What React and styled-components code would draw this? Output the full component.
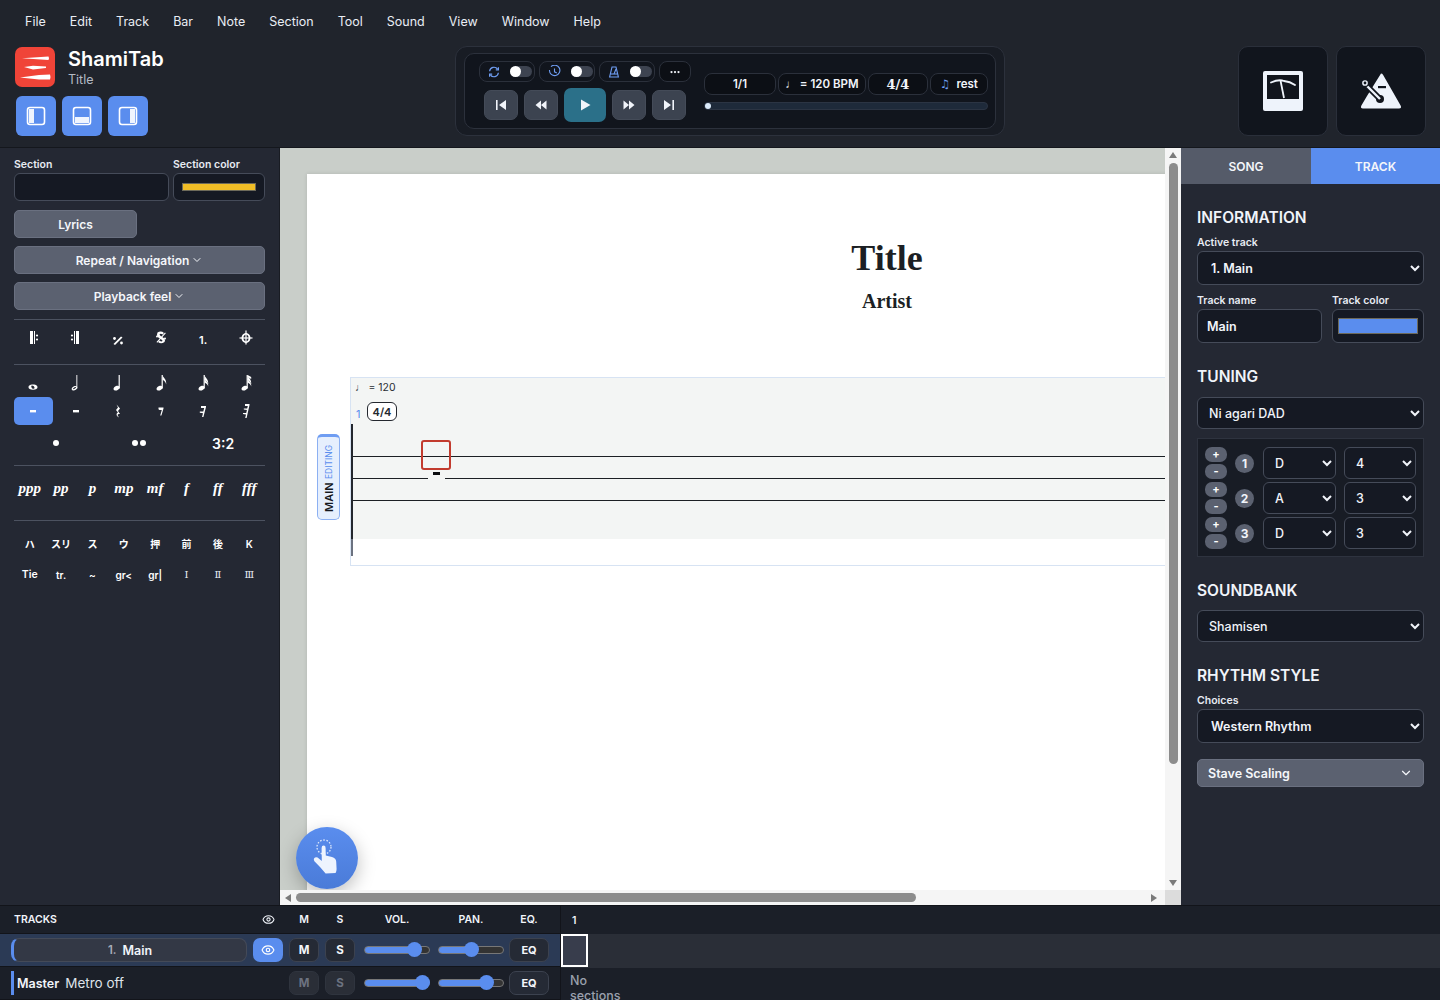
import React from "react";
import styled, { createGlobalStyle } from "styled-components";
import { ChevronDown, Eye, MoreHorizontal } from "lucide-react";

const GlobalStyle = createGlobalStyle`
  html, body { margin: 0; padding: 0; height: 100%; overflow: hidden; }
  body { background: #20242c; font-family: Inter, "Noto Sans", "Liberation Sans", sans-serif; color: #f1f4fa; }
  * { box-sizing: border-box; }
  #root { height: 1000px; }
`;

const BLUE = "#5a8dee";

const menuItems = ["File", "Edit", "Track", "Bar", "Note", "Section", "Tool", "Sound", "View", "Window", "Help"];

function PanelIcon({ side }) {
  return (
    <svg width="20" height="20" viewBox="0 0 20 20" fill="none">
      <rect x="1.5" y="1.5" width="17" height="17" rx="2.5" stroke="#fff" strokeWidth="1.6" />
      {side === "left" && <rect x="3" y="3" width="5" height="14" fill="#fff" opacity="0.9" />}
      {side === "bottom" && <rect x="3" y="11" width="14" height="6" fill="#fff" opacity="0.9" />}
      {side === "right" && <rect x="12" y="3" width="5" height="14" fill="#fff" opacity="0.9" />}
    </svg>
  );
}

function Logo() {
  return (
    <svg width="40" height="40" viewBox="0 0 40 40">
      <rect width="40" height="40" rx="7" fill="#f04438" />
      <path d="M7 11.2 L26 10 L33.5 9.6 Q34.5 11.2 33.5 13 L26 12.6 Z" fill="#fff" />
      <path d="M9 20 L18 18.8 L31 19.4 L31 21 L18 22.4 Z" fill="#fff" />
      <path d="M5 30.4 L24 28 L35 27.6 Q36 30 35 32.6 L24 32.4 Z" fill="#fff" />
    </svg>
  );
}

function LoopIcon() {
  return (
    <svg width="12" height="12" viewBox="0 0 12 12" fill="none" stroke="#6f9df2" strokeWidth="1.2">
      <path d="M1.6 5.2 A4.4 4.4 0 0 1 9.6 3.2" />
      <path d="M10.4 1.2 V3.8 H7.8" />
      <path d="M10.4 6.8 A4.4 4.4 0 0 1 2.4 8.8" />
      <path d="M1.6 10.8 V8.2 H4.2" />
    </svg>
  );
}

function ClockIcon() {
  return (
    <svg width="13" height="13" viewBox="0 0 13 13" fill="none" stroke="#6f9df2" strokeWidth="1.1">
      <path d="M3 1.7 A5.2 5.2 0 1 1 1.5 5" />
      <path d="M6.5 3.4 V6.8 L8.8 8" />
    </svg>
  );
}

function MetroSmallIcon() {
  return (
    <svg width="12" height="12" viewBox="0 0 12 12" fill="none" stroke="#6f9df2" strokeWidth="1.1">
      <path d="M4 1 H8 L10.4 11 H1.6 Z" />
      <path d="M6 8 L8 3" />
      <path d="M2.6 8 H9.4" />
    </svg>
  );
}

function TransportIcon({ kind }) {
  const paths = {
    first: "M2 2h1.6v10H2z M12 2v10L5 7z",
    back: "M7 2.5v9L1.5 7z M12.5 2.5v9L7 7z",
    play: "M3 1.5v11L12.5 7z",
    forward: "M1.5 2.5v9L7 7z M7 2.5v9L12.5 7z",
    last: "M2 2v10l7-5z M10.4 2H12v10h-1.6z",
  };
  return (
    <svg width="14" height="14" viewBox="0 0 14 14" fill="#f1f4fa">
      <path d={paths[kind]} />
    </svg>
  );
}

function TuningIcon() {
  return (
    <svg width="40" height="40" viewBox="0 0 40 40">
      <rect width="40" height="40" rx="2" fill="#eef3fb" />
      <rect x="4" y="4" width="32" height="24" fill="#11151d" />
      <path d="M8 11.5 Q16 8 21 10 Q27 10.5 32 14" fill="none" stroke="#eef3fb" strokeWidth="1.8" strokeLinecap="round" />
      <path d="M17.5 9.5 L21 27" fill="none" stroke="#eef3fb" strokeWidth="1.8" />
    </svg>
  );
}

function MetronomeIcon() {
  return (
    <svg width="42" height="38" viewBox="0 0 42 38">
      <path d="M21 1.5 Q22.3 1.5 23 2.8 L40.6 33.6 Q42 36.5 39 36.5 L3 36.5 Q0 36.5 1.4 33.6 L7 24 L21 1.5 Z" fill="#eef3fb" />
      <rect x="18" y="14" width="8" height="2.2" fill="#11151d" />
      <circle cx="20" cy="27" r="4" fill="#11151d" />
      <path d="M4 11 L20 27" stroke="#11151d" strokeWidth="6" />
      <path d="M5 12 L20 27" stroke="#eef3fb" strokeWidth="2.4" />
      <circle cx="5" cy="11" r="3.6" fill="#eef3fb" stroke="#11151d" strokeWidth="1.5" />
      <circle cx="5" cy="11" r="1.4" fill="#11151d" />
    </svg>
  );
}

function BarSymbol({ kind }) {
  const white = "#fff";
  return (
    <svg width="16" height="16" viewBox="0 0 16 16" fill={white}>
      {kind === "start" && (
        <>
          <rect x="5" y="1" width="3" height="13" />
          <rect x="9" y="1" width="1" height="13" />
          <circle cx="12" cy="5.5" r="1.1" />
          <circle cx="12" cy="9.5" r="1.1" />
        </>
      )}
      {kind === "end" && (
        <>
          <rect x="6" y="1" width="1" height="13" />
          <rect x="8" y="1" width="3" height="13" />
          <circle cx="4" cy="5.5" r="1.1" />
          <circle cx="4" cy="9.5" r="1.1" />
        </>
      )}
      {kind === "percent" && (
        <>
          <path d="M3.5 14 L11 6.5 L12.5 7.5 L5 15 Z" />
          <circle cx="4.5" cy="8.5" r="1.4" />
          <circle cx="11.5" cy="13" r="1.4" />
        </>
      )}
      {kind === "segno" && (
        <>
          <path d="M4.5 2.5 Q8 0.5 11 3 L9.5 4.5 Q7.5 3 6.5 4.5 Q7 6 10 7.5 Q13 9.5 11.5 12 Q8 14.5 5 12 L6.5 10.5 Q8.5 12.5 9.6 10.8 Q9 9.5 6 8 Q3 6 4.5 2.5 Z" />
          <path d="M3.5 12 L12 2.5 L12.8 3.2 L4.3 12.8 Z" />
          <circle cx="4" cy="6.5" r="1" />
          <circle cx="12" cy="8.5" r="1" />
        </>
      )}
      {kind === "coda" && (
        <>
          <path fillRule="evenodd" d="M8 3 A4.5 5 0 1 1 7.99 3 Z M8 4.6 A2.6 3.4 0 1 0 8.01 4.6 Z" />
          <rect x="7.4" y="0.5" width="1.2" height="14" />
          <rect x="1.5" y="7.4" width="13" height="1.2" />
        </>
      )}
    </svg>
  );
}

// flags: 0 = quarter, 1 = eighth ...
function NoteIcon({ value }) {
  if (value === "whole") {
    return (
      <svg width="16" height="18" viewBox="0 0 16 18">
        <path fillRule="evenodd" fill="#fff" d="M8 10.5 C11.5 10.5 12.5 12 12.5 13.2 C12.5 14.5 11 15.7 8 15.7 C5 15.7 3.5 14.5 3.5 13.2 C3.5 12 4.5 10.5 8 10.5 Z M7 11.5 C6 11.5 6 13 7 14.2 C8 15.2 9.7 15 9.5 13.5 C9.3 12.2 8 11.5 7 11.5 Z" />
      </svg>
    );
  }
  const flags = { half: 0, quarter: 0, eighth: 1, sixteenth: 2, thirtysecond: 3 }[value];
  return (
    <svg width="16" height="18" viewBox="0 0 16 18" fill="#fff">
      {value === "half" ? (
        <path fillRule="evenodd" d="M6 12.2 C8.4 11.4 9.6 12.6 9.2 14 C8.6 15.8 6 17 4.4 16.2 C3 15.4 3.6 13.2 6 12.2 Z M7.5 13 C6.4 13.2 4.6 14.6 4.8 15.2 C5.2 15.8 7.4 14.6 8.2 13.6 C8.4 13.2 8 12.9 7.5 13 Z" />
      ) : (
        <path d="M6 12 C8.6 11 10 12.4 9.5 14 C8.9 15.9 6 17.2 4.3 16.3 C2.8 15.4 3.4 13.1 6 12 Z" />
      )}
      <rect x={value === "half" ? 8.4 : 8.6} y="1" width={value === "half" ? 0.9 : 1.2} height="13.5" />
      {flags >= 1 && <path d="M9.6 1 C10 4 13.8 5 13.2 10.5 C12.8 7.8 11 7 9.6 5.8 Z" />}
      {flags >= 2 && <path d="M9.6 4 C10 7 13.8 8 13.2 12.5 C12.8 10 11 9.8 9.6 8.6 Z" />}
      {flags >= 3 && <path d="M9.6 1 L13.2 3 L13.2 5 L9.6 3 Z" />}
    </svg>
  );
}

function RestIcon({ value }) {
  return (
    <svg width="16" height="16" viewBox="0 0 16 16" fill="#fff">
      {(value === "whole" || value === "half") && <rect x="5" y="7" width="6" height="2.4" />}
      {value === "quarter" && (
        <path d="M6.5 1.5 L10 5.5 L8 8 L10 11 Q8 10.5 7.5 12 L9 14.5 Q5.5 12.5 7 10 L8 9.6 L6 7 L8 4.6 Z" />
      )}
      {value === "eighth" && (
        <>
          <path d="M5.5 4.5 L10.5 4.5 L10.5 5.6 L8.4 12.5 L7.2 12.5 L8.8 7 Q6.5 7.4 5.5 6.2 Z" />
        </>
      )}
      {value === "sixteenth" && (
        <>
          <path d="M6 3 L11 3 L11 4 L8.4 14 L7 14 L8 10.2 L4.8 9.8 L4.8 8.6 L8.3 8.6 L9.2 5 L6 5 Z" />
        </>
      )}
      {value === "thirtysecond" && (
        <>
          <path d="M7 1 L11.5 1 L11.5 2 L8.6 15 L7.2 15 L8 11.5 L5 11 L5 10 L8.2 10 L8.9 7 L5.8 6.6 L5.8 5.5 L9.2 5.5 L9.8 3 L7 3 Z" />
        </>
      )}
    </svg>
  );
}

function DotIcon({ count }) {
  return (
    <svg width="18" height="8" viewBox="0 0 18 8" fill="#fff">
      {count === 1 && <circle cx="9" cy="4" r="3" />}
      {count === 2 && (
        <>
          <circle cx="5" cy="4" r="3" />
          <circle cx="13" cy="4" r="3" />
        </>
      )}
    </svg>
  );
}

function HandIcon() {
  return (
    <svg width="30" height="38" viewBox="0 0 30 38">
      <circle cx="12" cy="9" r="7" fill="none" stroke="#e9f1fd" strokeWidth="1.3" strokeDasharray="1.6 1.6" opacity="0.9" />
      <path
        fill="#eef4fe"
        d="M9.6 10 Q9.6 7.6 11.6 7.6 Q13.6 7.6 13.6 10 L13.8 17.4 L20 19 Q24 20 24.2 23.6 L24.6 31 Q24.6 33 23.6 35 L13.6 35.6 Q11 32.4 8 29 L2.4 23.2 Q1 21 3 19.6 Q5 18.6 6.8 20.4 L9.8 23 Z"
      />
    </svg>
  );
}

const App = () => {
  return (
    <Shell>
      <GlobalStyle />
      <TopBar>
        <MenuBar>
          {menuItems.map((m) => (
            <MenuItem key={m}>{m}</MenuItem>
          ))}
        </MenuBar>
        <HeaderRow>
          <Brand>
            <BrandTop>
              <Logo />
              <BrandText>
                <BrandName>ShamiTab</BrandName>
                <BrandSub>Title</BrandSub>
              </BrandText>
            </BrandTop>
            <PanelButtons>
              <PanelButton><PanelIcon side="left" /></PanelButton>
              <PanelButton><PanelIcon side="bottom" /></PanelButton>
              <PanelButton><PanelIcon side="right" /></PanelButton>
            </PanelButtons>
          </Brand>
          <TransportOuter>
            <TransportInner>
              <TransportLeft>
                <ToggleRow>
                  <TogglePill><LoopIcon /><Switch /></TogglePill>
                  <TogglePill><ClockIcon /><Switch /></TogglePill>
                  <TogglePill><MetroSmallIcon /><Switch /></TogglePill>
                  <MorePill><MoreHorizontal size={12} strokeWidth={2.5} /></MorePill>
                </ToggleRow>
                <TransportButtons>
                  <TransportButton><TransportIcon kind="first" /></TransportButton>
                  <TransportButton><TransportIcon kind="back" /></TransportButton>
                  <PlayButton><TransportIcon kind="play" /></PlayButton>
                  <TransportButton><TransportIcon kind="forward" /></TransportButton>
                  <TransportButton><TransportIcon kind="last" /></TransportButton>
                </TransportButtons>
              </TransportLeft>
              <TransportRight>
                <InfoRow>
                  <InfoCell $w={72}>1/1</InfoCell>
                  <InfoCell $w={88}>♩ = 120 BPM</InfoCell>
                  <InfoCell $w={60} $serif>4/4</InfoCell>
                  <InfoCell $w={58}><BlueNote>♫</BlueNote>rest</InfoCell>
                </InfoRow>
                <Progress><ProgressDot /></Progress>
              </TransportRight>
            </TransportInner>
          </TransportOuter>
          <Tiles>
            <Tile><TuningIcon /></Tile>
            <Tile><MetronomeIcon /></Tile>
          </Tiles>
        </HeaderRow>
      </TopBar>

      <Middle>
        <LeftPanel>
          <FieldRow>
            <Field $w={155}>
              <SmallLabel>Section</SmallLabel>
              <DarkInput />
            </Field>
            <Field $w={92}>
              <SmallLabel>Section color</SmallLabel>
              <ColorBox $h={28} $pad={9}><Swatch $color="#f0bd26" $h={8} /></ColorBox>
            </Field>
          </FieldRow>
          <GreyButton $w={123}>Lyrics</GreyButton>
          <GreyButton>Repeat / Navigation<ChevronDown size={12} /></GreyButton>
          <GreyButton>Playback feel<ChevronDown size={12} /></GreyButton>
          <Divider />
          <SymbolGrid $cols={6} $rowH={36}>
            <SymbolCell><BarSymbol kind="start" /></SymbolCell>
            <SymbolCell><BarSymbol kind="end" /></SymbolCell>
            <SymbolCell><BarSymbol kind="percent" /></SymbolCell>
            <SymbolCell><BarSymbol kind="segno" /></SymbolCell>
            <SymbolCell $size={11} $down={3}>1.</SymbolCell>
            <SymbolCell><BarSymbol kind="coda" /></SymbolCell>
          </SymbolGrid>
          <Divider $top={8} />
          <SymbolGrid $cols={6} $rowH={28} $top={4}>
            <SymbolCell><NoteIcon value="whole" /></SymbolCell>
            <SymbolCell><NoteIcon value="half" /></SymbolCell>
            <SymbolCell><NoteIcon value="quarter" /></SymbolCell>
            <SymbolCell><NoteIcon value="eighth" /></SymbolCell>
            <SymbolCell><NoteIcon value="sixteenth" /></SymbolCell>
            <SymbolCell><NoteIcon value="thirtysecond" /></SymbolCell>
            <SymbolCell $active><RestIcon value="whole" /></SymbolCell>
            <SymbolCell><RestIcon value="half" /></SymbolCell>
            <SymbolCell><RestIcon value="quarter" /></SymbolCell>
            <SymbolCell><RestIcon value="eighth" /></SymbolCell>
            <SymbolCell><RestIcon value="sixteenth" /></SymbolCell>
            <SymbolCell><RestIcon value="thirtysecond" /></SymbolCell>
          </SymbolGrid>
          <SymbolGrid $cols={3} $rowH={28} $top={4}>
            <SymbolCell><DotIcon count={1} /></SymbolCell>
            <SymbolCell><DotIcon count={2} /></SymbolCell>
            <SymbolCell $size={14}>3:2</SymbolCell>
          </SymbolGrid>
          <Divider $top={8} />
          <SymbolGrid $cols={8} $rowH={45}>
            {["ppp", "pp", "p", "mp", "mf", "f", "ff", "fff"].map((d) => (
              <DynamicCell key={d}>{d}</DynamicCell>
            ))}
          </SymbolGrid>
          <Divider />
          <SymbolGrid $cols={8} $rowH={31} $top={7}>
            {["ハ", "スリ", "ス", "ウ", "押", "前", "後", "K"].map((k) => (
              <SymbolCell key={k} $size={10} $cjk>{k}</SymbolCell>
            ))}
            <SymbolCell $size={10.5}>Tie</SymbolCell>
            <SymbolCell $size={10}>tr.</SymbolCell>
            <SymbolCell $size={10}>~</SymbolCell>
            <SymbolCell $size={10}>gr&lt;</SymbolCell>
            <SymbolCell $size={10}>gr|</SymbolCell>
            <NumeralCell>Ⅰ</NumeralCell>
            <NumeralCell>Ⅱ</NumeralCell>
            <NumeralCell>Ⅲ</NumeralCell>
          </SymbolGrid>
        </LeftPanel>

        <ScoreArea>
          <Viewport>
            <Page>
              <Title>Title</Title>
              <Artist>Artist</Artist>
              <ScoreRow>
                <TrackTab>
                  <TrackTabMain>MAIN</TrackTabMain>
                  <TrackTabSub>EDITING</TrackTabSub>
                </TrackTab>
                <System>
                  <Tempo>♩ = 120</Tempo>
                  <BarNumber>1</BarNumber>
                  <TimeBadge>4/4</TimeBadge>
                  <StaveBand>
                    <svg width="816" height="188" viewBox="0 0 816 188">
                      <path d="M0 78.5 H816 M0 100.5 H816 M0 122.5 H816" stroke="#1b1f24" strokeWidth="1" />
                      <rect x="77" y="99" width="17" height="3" fill="#f3f5f4" />
                      <rect x="0" y="46" width="2" height="115" fill="#23272e" />
                      <rect x="0" y="161" width="2" height="17" fill="#6b7280" />
                    </svg>
                  </StaveBand>
                  <Cursor />
                  <RestMark />
                </System>
              </ScoreRow>
            </Page>
            <Fab><HandIcon /></Fab>
          </Viewport>
          <VScroll>
            <ScrollArrow $dir="up" />
            <VThumb />
            <ScrollArrow $dir="down" />
          </VScroll>
          <HScroll>
            <ScrollArrow $dir="left" />
            <HThumb />
            <ScrollArrow $dir="right" />
          </HScroll>
          <ScrollCorner />
        </ScoreArea>

        <RightPanel>
          <Tabs>
            <Tab>SONG</Tab>
            <Tab $active>TRACK</Tab>
          </Tabs>
          <PanelBody>
            <SectionTitle>INFORMATION</SectionTitle>
            <SmallLabel $top={9}>Active track</SmallLabel>
            <DarkSelect $h={34} $bold defaultValue="1. Main">
              <option>1. Main</option>
            </DarkSelect>
            <FieldRow $gap={10} $top={9}>
              <Field $w={125}>
                <SmallLabel>Track name</SmallLabel>
                <NameInput>Main</NameInput>
              </Field>
              <Field $w={92}>
                <SmallLabel>Track color</SmallLabel>
                <ColorBox $h={34} $pad={6}><Swatch $color={BLUE} $h={16} /></ColorBox>
              </Field>
            </FieldRow>
            <SectionTitle $top={25}>TUNING</SectionTitle>
            <DarkSelect $h={32} $top={11} defaultValue="Ni agari DAD">
              <option>Ni agari DAD</option>
            </DarkSelect>
            <TuningBox>
              {[
                [1, "D", "4"],
                [2, "A", "3"],
                [3, "D", "3"],
              ].map(([n, pitch, octave]) => (
                <TuningRow key={n}>
                  <Steppers>
                    <Stepper>+</Stepper>
                    <Stepper>-</Stepper>
                  </Steppers>
                  <StringNumber>{n}</StringNumber>
                  <DarkSelect $h={32} $w={73} defaultValue={pitch}>
                    <option>{pitch}</option>
                  </DarkSelect>
                  <DarkSelect $h={32} $w={72} defaultValue={octave}>
                    <option>{octave}</option>
                  </DarkSelect>
                </TuningRow>
              ))}
            </TuningBox>
            <SectionTitle $top={25}>SOUNDBANK</SectionTitle>
            <DarkSelect $h={32} $top={10} defaultValue="Shamisen">
              <option>Shamisen</option>
            </DarkSelect>
            <SectionTitle $top={25}>RHYTHM STYLE</SectionTitle>
            <SmallLabel $top={9}>Choices</SmallLabel>
            <DarkSelect $h={34} $bold defaultValue="Western Rhythm">
              <option>Western Rhythm</option>
            </DarkSelect>
            <ScalingButton>Stave Scaling<ChevronDown size={14} /></ScalingButton>
          </PanelBody>
        </RightPanel>
      </Middle>

      <Bottom>
        <TrackColumn>
          <TrackHead>
            <TracksLabel>TRACKS</TracksLabel>
            <HeadCell $w={30}><Eye size={13} /></HeadCell>
            <HeadCell $w={30} $ml={6}>M</HeadCell>
            <HeadCell $w={30} $ml={6}>S</HeadCell>
            <HeadCell $w={66} $ml={9}>VOL.</HeadCell>
            <HeadCell $w={66} $ml={8}>PAN.</HeadCell>
            <HeadCell $w={40} $ml={5}>EQ.</HeadCell>
          </TrackHead>
          <TrackRow $selected>
            <TrackName><TrackIndex>1.</TrackIndex>Main</TrackName>
            <EyeButton><Eye size={14} /></EyeButton>
            <SmallButton $ml={6}>M</SmallButton>
            <SmallButton $ml={6}>S</SmallButton>
            <Slider $ml={9} $value={77} />
            <Slider $ml={8} $value={50} />
            <EqButton>EQ</EqButton>
          </TrackRow>
          <TrackRow>
            <MasterName>
              <MasterBar />
              <MasterLabel>Master</MasterLabel>
              <MetroLabel>Metro off</MetroLabel>
            </MasterName>
            <SmallButton $ml={6} $off>M</SmallButton>
            <SmallButton $ml={6} $off>S</SmallButton>
            <Slider $ml={9} $value={89} />
            <Slider $ml={8} $value={73} />
            <EqButton>EQ</EqButton>
          </TrackRow>
        </TrackColumn>
        <Timeline>
          <TimelineHead><BarIndex>1</BarIndex></TimelineHead>
          <TimelineRow $selected><BarCell /></TimelineRow>
          <NoSections>No sections</NoSections>
        </Timeline>
      </Bottom>
    </Shell>
  );
};

export default App;

const Shell = styled.div`
  width: 1440px;
  height: 1000px;
  display: flex;
  flex-direction: column;
  overflow: hidden;
`;

const TopBar = styled.header`
  height: 148px;
  flex: none;
  background: #20242c;
  border-bottom: 1px solid #14171d;
`;

const MenuBar = styled.nav`
  height: 43px;
  padding-left: 13px;
  display: flex;
  align-items: center;
`;

const MenuItem = styled.span`
  padding: 0 12px;
  font-size: 12.5px;
  color: #e9edf4;
`;

const HeaderRow = styled.div`
  display: flex;
  height: 104px;
`;

const Brand = styled.div`
  width: 455px;
  padding-left: 15px;
  padding-top: 4px;
`;

const BrandTop = styled.div`
  display: flex;
  gap: 13px;
  align-items: center;
  height: 40px;
`;

const BrandText = styled.div`
  display: flex;
  flex-direction: column;
  gap: 1px;
`;

const BrandName = styled.div`
  font-size: 20px;
  font-weight: 600;
  line-height: 24px;
  color: #fff;
`;

const BrandSub = styled.div`
  font-size: 12.5px;
  line-height: 15px;
  color: #b4bac5;
`;

const PanelButtons = styled.div`
  display: flex;
  gap: 6px;
  margin: 9px 0 0 1px;
`;

const PanelButton = styled.button`
  width: 40px;
  height: 40px;
  border: none;
  border-radius: 6px;
  background: ${BLUE};
  display: flex;
  align-items: center;
  justify-content: center;
  padding: 0;
`;

const TransportOuter = styled.div`
  width: 550px;
  height: 90px;
  margin-top: 3px;
  padding: 6px 8px;
  background: #181c24;
  border: 1px solid #2c313c;
  border-radius: 12px;
`;

const TransportInner = styled.div`
  height: 76px;
  background: #11151d;
  border: 1px solid #2c313c;
  border-radius: 10px;
  display: flex;
  padding: 7px 6px 0 14px;
`;

const TransportLeft = styled.div`
  width: 226px;
`;

const ToggleRow = styled.div`
  display: flex;
  gap: 4px;
`;

const TogglePill = styled.div`
  width: 56px;
  height: 21px;
  background: #11151d;
  border: 1px solid #2b303b;
  border-radius: 8px;
  display: flex;
  align-items: center;
  gap: 10px;
  padding-left: 8px;
`;

const Switch = styled.span`
  position: relative;
  width: 22px;
  height: 11px;
  border-radius: 6px;
  background: #3d4350;

  &::before {
    content: "";
    position: absolute;
    left: 0;
    top: 0;
    width: 11px;
    height: 11px;
    border-radius: 50%;
    background: #fff;
  }
`;

const MorePill = styled.div`
  width: 32px;
  height: 21px;
  background: #0c0f15;
  border: 1px solid #2b303b;
  border-radius: 8px;
  display: flex;
  align-items: center;
  justify-content: center;
`;

const TransportButtons = styled.div`
  display: flex;
  align-items: center;
  gap: 6px;
  height: 34px;
  margin: 6px 0 0 5px;
`;

const TransportButton = styled.button`
  width: 34px;
  height: 30px;
  border: 1px solid #444b58;
  border-radius: 7px;
  background: #3c4350;
  display: flex;
  align-items: center;
  justify-content: center;
  padding: 0;
`;

const PlayButton = styled(TransportButton)`
  width: 42px;
  height: 34px;
  border: none;
  background: #2b7089;
`;

const TransportRight = styled.div`
  margin-left: -1px;
  padding-top: 12px;
`;

const InfoRow = styled.div`
  display: flex;
  gap: 2px;
`;

const InfoCell = styled.div`
  width: ${(p) => p.$w}px;
  height: 22px;
  background: #0c0f15;
  border: 1px solid #2b303b;
  border-radius: 8px;
  display: flex;
  align-items: center;
  justify-content: center;
  font-size: ${(p) => (p.$serif ? 13 : 11.5)}px;
  font-weight: 600;
  color: #f1f4fa;
  font-family: ${(p) => (p.$serif ? '"DejaVu Serif", serif' : "inherit")};
`;

const BlueNote = styled.span`
  color: #6f9df2;
  margin-right: 6px;
  font-family: "DejaVu Sans", sans-serif;
`;

const Progress = styled.div`
  height: 8px;
  width: 284px;
  margin-top: 7px;
  background: #1e2a3a;
  border: 1px solid #2b3443;
  border-radius: 4px;
  display: flex;
  align-items: center;
`;

const ProgressDot = styled.span`
  width: 6px;
  height: 6px;
  border-radius: 50%;
  background: #dcebfb;
`;

const Tiles = styled.div`
  display: flex;
  gap: 8px;
  margin: 3px 0 0 233px;
`;

const Tile = styled.div`
  width: 90px;
  height: 90px;
  background: #11151d;
  border: 1px solid #2a2f3a;
  border-radius: 10px;
  display: flex;
  align-items: center;
  justify-content: center;
`;

const Middle = styled.div`
  flex: 1;
  display: flex;
  min-height: 0;
`;

const LeftPanel = styled.aside`
  width: 280px;
  flex: none;
  background: #242833;
  border-right: 1px solid #191c23;
  padding: 10px 14px 0;
  display: flex;
  flex-direction: column;
`;

const FieldRow = styled.div`
  display: flex;
  gap: ${(p) => p.$gap ?? 4}px;
  margin-top: ${(p) => p.$top ?? 0}px;
`;

const Field = styled.div`
  width: ${(p) => p.$w}px;
`;

const SmallLabel = styled.div`
  font-size: 10.5px;
  font-weight: 600;
  line-height: 13px;
  margin-bottom: 2px;
  margin-top: ${(p) => p.$top ?? 0}px;
  color: #e7ebf2;
`;

const DarkInput = styled.div`
  height: 28px;
  background: #151923;
  border: 1px solid #454b59;
  border-radius: 6px;
`;

const ColorBox = styled.div`
  height: ${(p) => p.$h}px;
  background: #151923;
  border: 1px solid #454b59;
  border-radius: 6px;
  display: flex;
  align-items: center;
  padding: 0 ${(p) => p.$pad - 1}px 0 ${(p) => p.$pad - 1}px;
`;

const Swatch = styled.div`
  flex: 1;
  height: ${(p) => p.$h}px;
  background: ${(p) => p.$color};
  border: 1px solid #6d6a5a;
`;

const GreyButton = styled.button`
  width: ${(p) => (p.$w ? `${p.$w}px` : "100%")};
  height: 28px;
  flex: none;
  margin-top: 9px;
  background: #5b6170;
  border: 1px solid #6a7080;
  border-radius: 5px;
  color: #f4f6fa;
  font: 600 12px Inter, sans-serif;
  display: flex;
  align-items: center;
  justify-content: center;
  gap: 2px;
  padding: 0;

  & + & {
    margin-top: 8px;
  }
`;

const Divider = styled.div`
  height: 1px;
  flex: none;
  background: #4c5260;
  margin-top: ${(p) => p.$top ?? 9}px;
`;

const SymbolGrid = styled.div`
  display: grid;
  grid-template-columns: repeat(${(p) => p.$cols}, 1fr);
  grid-auto-rows: ${(p) => p.$rowH}px;
  margin-top: ${(p) => p.$top ?? 0}px;
  column-gap: ${(p) => (p.$cols === 6 ? 3.5 : 0)}px;
`;

const SymbolCell = styled.div`
  display: flex;
  align-items: center;
  justify-content: center;
  border-radius: 5px;
  background: ${(p) => (p.$active ? BLUE : "transparent")};
  font-size: ${(p) => p.$size ?? 12}px;
  font-weight: 600;
  color: #fff;
  padding-top: ${(p) => p.$down ?? 0}px;
  font-family: ${(p) => (p.$cjk ? 'Inter, "Noto Sans CJK JP", sans-serif' : "inherit")};
`;

const DynamicCell = styled.div`
  display: flex;
  align-items: center;
  justify-content: center;
  font: italic 700 15px "Liberation Serif", serif;
  color: #fff;
`;

const NumeralCell = styled.div`
  display: flex;
  align-items: center;
  justify-content: center;
  font: 400 10px "DejaVu Serif", serif;
  color: #e8ecf4;
`;

const ScoreArea = styled.main`
  width: 901px;
  flex: none;
  display: grid;
  grid-template-columns: 885px 16px;
  grid-template-rows: 742px 15px;
  background: #fff;
`;

const Viewport = styled.div`
  position: relative;
  overflow: hidden;
  background: #c9cec9;
  padding: 26px 0 0 27px;
`;

const Page = styled.div`
  width: 1160px;
  height: 900px;
  background: #fff;
  padding-top: 54px;
  box-shadow: 0 0 4px rgba(0, 0, 0, 0.12);
`;

const Title = styled.h1`
  margin: 0;
  text-align: center;
  font: 700 36px/60px "Liberation Serif", serif;
  color: #1c1f24;
`;

const Artist = styled.div`
  margin-top: 0;
  text-align: center;
  font: 700 20px/26px "Liberation Serif", serif;
  color: #1c1f24;
`;

const ScoreRow = styled.div`
  display: flex;
  margin-top: 63px;
  padding-left: 10px;
`;

const TrackTab = styled.div`
  width: 23px;
  height: 86px;
  margin-top: 57px;
  background: #e6effd;
  border: 1px solid #8cb0f2;
  border-bottom: 3px solid #6f9df2;
  border-radius: 5px;
  writing-mode: vertical-rl;
  transform: rotate(180deg);
  display: flex;
  align-items: center;
  justify-content: flex-start;
  gap: 3px;
  padding-top: 7px;
`;

const TrackTabMain = styled.span`
  font-size: 11px;
  font-weight: 600;
  color: #15181e;
`;

const TrackTabSub = styled.span`
  font-size: 8.5px;
  color: #5a8dee;
`;

const System = styled.div`
  position: relative;
  width: 816px;
  height: 189px;
  margin-left: 10px;
  background: #fff;
  border: 1px solid #d7e3f3;
  border-right: none;
`;

const StaveBand = styled.div`
  height: 161px;
  background: #f3f5f4;
  line-height: 0;
`;

const Tempo = styled.span`
  position: absolute;
  left: 4px;
  top: 3px;
  font-size: 10.5px;
  color: #2a2e35;
`;

const BarNumber = styled.span`
  position: absolute;
  left: 5px;
  top: 29px;
  font-size: 11px;
  color: #5a8dee;
`;

const TimeBadge = styled.span`
  position: absolute;
  left: 16px;
  top: 24px;
  width: 30px;
  height: 19px;
  background: #fff;
  border: 1px solid #23272e;
  border-radius: 6px;
  font-size: 11px;
  font-weight: 600;
  color: #23272e;
  display: flex;
  align-items: center;
  justify-content: center;
`;

const Cursor = styled.span`
  position: absolute;
  left: 70px;
  top: 62px;
  width: 30px;
  height: 30px;
  border: 2px solid #c23b2e;
  border-radius: 3px;
`;

const RestMark = styled.span`
  position: absolute;
  left: 82px;
  top: 94px;
  width: 7px;
  height: 3px;
  background: #0b0d10;
`;

const Fab = styled.button`
  position: absolute;
  left: 16px;
  top: 679px;
  width: 62px;
  height: 62px;
  border: none;
  border-radius: 50%;
  background: linear-gradient(180deg, #5a8dee, #4a7bd8);
  box-shadow: 0 6px 18px rgba(0, 0, 0, 0.25);
  display: flex;
  align-items: center;
  justify-content: center;
  padding: 0 0 2px 0;
`;

const VScroll = styled.div`
  background: #f5f5f5;
  display: flex;
  flex-direction: column;
  align-items: center;
  padding: 4px 0;
`;

const VThumb = styled.div`
  width: 9px;
  height: 601px;
  margin-top: 5px;
  background: #8c8c8c;
  border-radius: 5px;
`;

const HScroll = styled.div`
  background: #f5f5f5;
  display: flex;
  align-items: center;
  padding-left: 5px;
`;

const HThumb = styled.div`
  width: 620px;
  height: 9px;
  margin-left: 5px;
  background: #8c8c8c;
  border-radius: 5px;
`;

const ScrollArrow = styled.span`
  width: 0;
  height: 0;
  flex: none;
  border-style: solid;
  border-color: transparent;
  ${(p) => p.$dir === "up" && "border-width: 0 4px 6px; border-bottom-color: #7a7a7a;"}
  ${(p) => p.$dir === "down" && "border-width: 6px 4px 0; border-top-color: #7a7a7a; margin-top: auto;"}
  ${(p) => p.$dir === "left" && "border-width: 4px 6px 4px 0; border-right-color: #7a7a7a;"}
  ${(p) => p.$dir === "right" && "border-width: 4px 0 4px 6px; border-left-color: #7a7a7a; margin-left: 235px;"}
`;

const ScrollCorner = styled.div`
  background: #dcdcdc;
`;

const RightPanel = styled.aside`
  flex: 1;
  background: #242833;
`;

const Tabs = styled.div`
  display: grid;
  grid-template-columns: 130px 1fr;
  height: 36px;
`;

const Tab = styled.div`
  background: ${(p) => (p.$active ? BLUE : "#555b69")};
  display: flex;
  align-items: center;
  justify-content: center;
  font-size: 12px;
  font-weight: 600;
  color: #f4f6fa;
`;

const PanelBody = styled.div`
  padding: 25px 16px 0;
`;

const SectionTitle = styled.h3`
  margin: ${(p) => p.$top ?? 0}px 0 0;
  font-size: 15.5px;
  font-weight: 600;
  line-height: 18px;
  color: #f1f4fa;
`;

const DarkSelect = styled.select`
  display: block;
  width: ${(p) => (p.$w ? `${p.$w}px` : "100%")};
  height: ${(p) => p.$h}px;
  margin-top: ${(p) => p.$top ?? 0}px;
  background: #151923;
  border: 1px solid #454b59;
  border-radius: 6px;
  color: #f1f4fa;
  font: ${(p) => (p.$bold ? 600 : 500)} 12.5px Inter, sans-serif;
  padding-left: ${(p) => (p.$bold ? 9 : 7)}px;
`;

const NameInput = styled.div`
  height: 34px;
  background: #151923;
  border: 1px solid #454b59;
  border-radius: 6px;
  display: flex;
  align-items: center;
  padding-left: 9px;
  font-size: 12.5px;
  font-weight: 600;
`;

const TuningBox = styled.div`
  margin-top: 9px;
  height: 119px;
  background: #181c25;
  border: 1px solid #2e333f;
  padding: 8px 7px 0;
  display: flex;
  flex-direction: column;
  gap: 3px;
`;

const TuningRow = styled.div`
  display: flex;
  align-items: center;
  height: 32px;
  gap: 8px;
`;

const Steppers = styled.div`
  display: flex;
  flex-direction: column;
  gap: 2px;
`;

const Stepper = styled.button`
  width: 22px;
  height: 15px;
  border: none;
  border-radius: 7px;
  background: #5b6170;
  color: #fff;
  font: 700 11px/15px Inter, sans-serif;
  padding: 0;
`;

const StringNumber = styled.span`
  width: 19px;
  height: 19px;
  border-radius: 50%;
  background: #5b6170;
  display: flex;
  align-items: center;
  justify-content: center;
  font-size: 12px;
  font-weight: 700;
  margin-right: 1px;
`;

const ScalingButton = styled.button`
  width: 100%;
  height: 28px;
  margin-top: 16px;
  background: #5b6170;
  border: 1px solid #6a7080;
  border-radius: 5px;
  color: #f4f6fa;
  font: 600 12.5px Inter, sans-serif;
  display: flex;
  align-items: center;
  justify-content: space-between;
  padding: 0 10px;
`;

const Bottom = styled.footer`
  height: 95px;
  flex: none;
  display: flex;
  background: #1b1f28;
  border-top: 1px solid #12141a;
`;

const TrackColumn = styled.div`
  width: 560px;
  flex: none;
`;

const TrackHead = styled.div`
  height: 28px;
  display: flex;
  align-items: center;
  padding-left: 14px;
  border-bottom: 1px solid #12141a;
`;

const TracksLabel = styled.span`
  width: 239px;
  font-size: 10.5px;
  font-weight: 600;
`;

const HeadCell = styled.span`
  width: ${(p) => p.$w}px;
  margin-left: ${(p) => p.$ml ?? 0}px;
  display: flex;
  justify-content: center;
  font-size: 10.5px;
  font-weight: 600;
`;

const TrackRow = styled.div`
  height: 33px;
  display: flex;
  align-items: center;
  padding-left: 11px;
  background: ${(p) => (p.$selected ? "#2b3a55" : "transparent")};
  border-bottom: 1px solid #12141a;
`;

const TrackName = styled.div`
  width: 236px;
  height: 24px;
  margin-right: 6px;
  background: #333845;
  border: 1px solid #444a58;
  border-left: 3px solid ${BLUE};
  border-radius: 8px;
  display: flex;
  align-items: center;
  justify-content: center;
  gap: 6px;
  font-size: 12.5px;
  font-weight: 600;
`;

const TrackIndex = styled.span`
  color: #a7adba;
  font-size: 11.5px;
`;

const EyeButton = styled.button`
  width: 30px;
  height: 24px;
  border: none;
  border-radius: 7px;
  background: ${BLUE};
  color: #fff;
  display: flex;
  align-items: center;
  justify-content: center;
  padding: 0;
`;

const SmallButton = styled.button`
  width: 30px;
  height: 24px;
  margin-left: ${(p) => p.$ml ?? 0}px;
  background: ${(p) => (p.$off ? "#2a2e37" : "#252a35")};
  border: 1px solid ${(p) => (p.$off ? "#2f343e" : "#3c424f")};
  border-radius: 7px;
  color: ${(p) => (p.$off ? "#6c7280" : "#f4f6fa")};
  font: 700 11.5px Inter, sans-serif;
  padding: 0;
`;

const EqButton = styled(SmallButton)`
  width: 40px;
  margin-left: 5px;
  font-size: 11px;
`;

const Slider = styled.div`
  position: relative;
  width: 66px;
  height: 8px;
  margin-left: ${(p) => p.$ml}px;
  border: 1px solid #777;
  border-radius: 4px;
  background: linear-gradient(
    90deg,
    ${BLUE} ${(p) => p.$value}%,
    #333 ${(p) => p.$value}%
  );

  &::after {
    content: "";
    position: absolute;
    top: -5px;
    left: calc(${(p) => p.$value}% - 7px);
    width: 15px;
    height: 15px;
    border-radius: 50%;
    background: ${BLUE};
  }
`;

const MasterName = styled.div`
  width: 272px;
  display: flex;
  align-items: center;
`;

const MasterBar = styled.span`
  width: 3px;
  height: 24px;
  margin-right: 3px;
  background: ${BLUE};
`;

const MasterLabel = styled.span`
  font-size: 12.5px;
  font-weight: 600;
  margin-right: 6px;
`;

const MetroLabel = styled.span`
  font-size: 13.5px;
  color: #dfe3ea;
`;

const Timeline = styled.div`
  flex: 1;
  border-left: 1px solid #12141a;
  overflow: hidden;
`;

const TimelineHead = styled.div`
  height: 28px;
  display: flex;
  align-items: center;
  padding-left: 11px;
`;

const BarIndex = styled.span`
  font-size: 10.5px;
  font-weight: 600;
`;

const TimelineRow = styled.div`
  height: 34px;
  background: #2a2e37;
`;

const BarCell = styled.div`
  width: 27px;
  height: 33px;
  background: #383d4c;
  border: 2px solid #fff;
`;

const NoSections = styled.div`
  width: 70px;
  padding: 5px 0 0 9px;
  font-size: 12.5px;
  font-weight: 500;
  line-height: 15px;
  color: #9aa0ad;
`;
